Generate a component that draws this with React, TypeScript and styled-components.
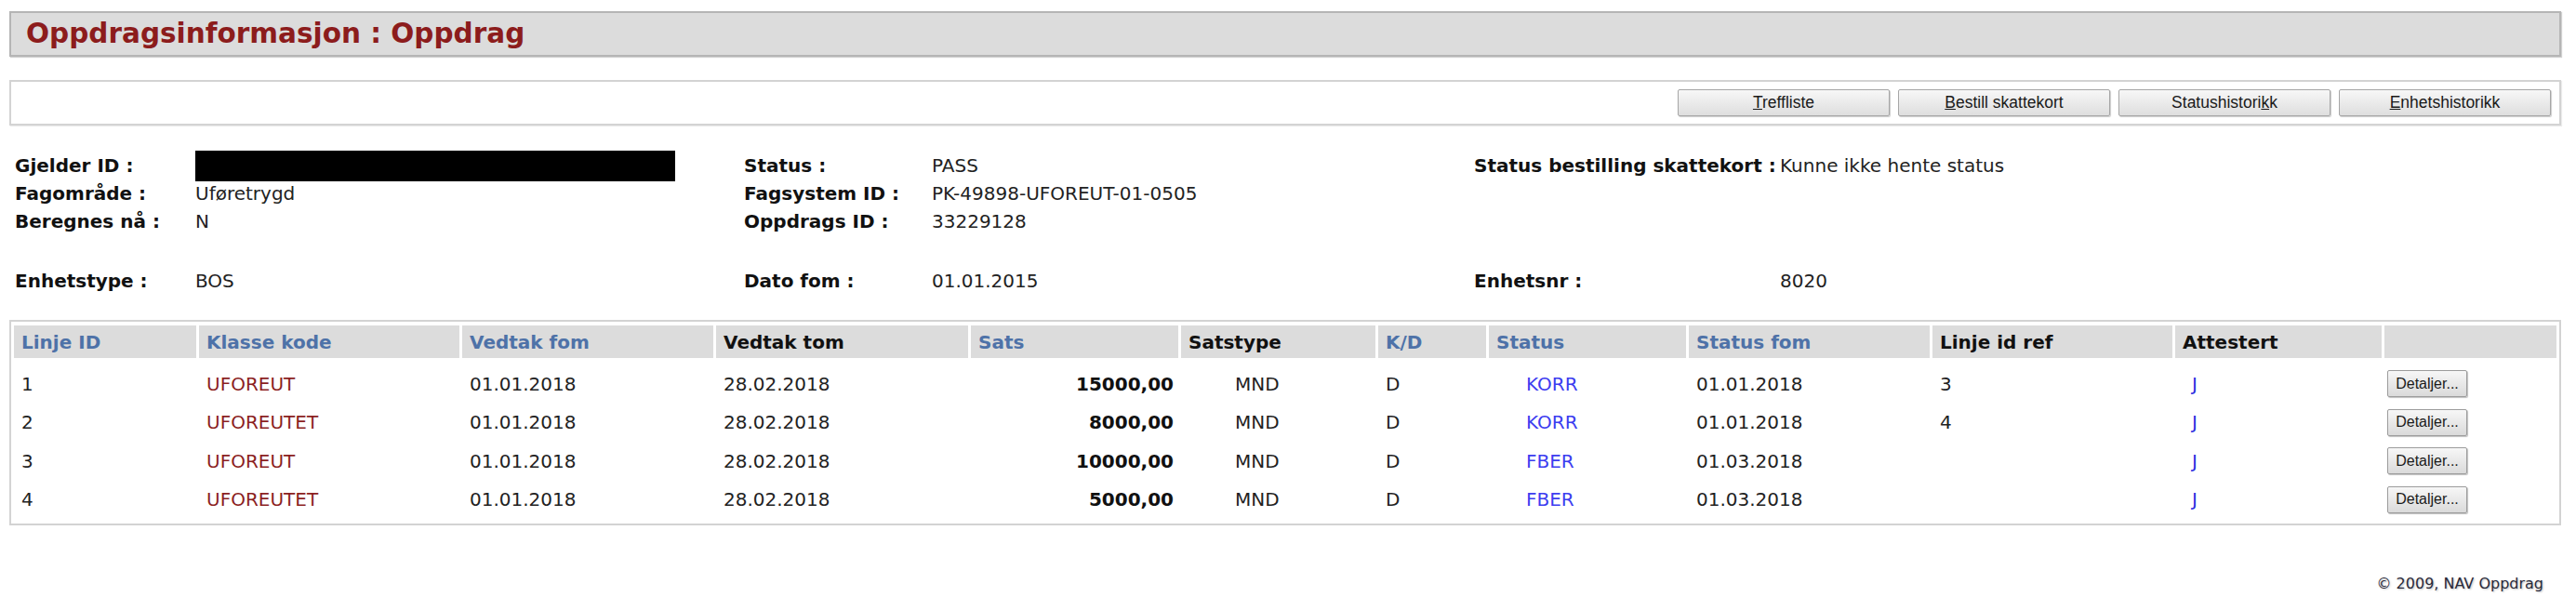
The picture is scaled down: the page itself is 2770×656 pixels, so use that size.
import React from "react";
import styled, { createGlobalStyle } from "styled-components";

const GlobalStyle = createGlobalStyle`
  html, body { margin: 0; padding: 0; background: #ffffff; }
  body { font-family: "DejaVu Sans", Verdana, sans-serif; color: #111; }
  #root { width: 2770px; }
`;

const Page = styled.div`
  width: 2770px;
  box-sizing: border-box;
  padding: 12px 16px 0 10px;
`;

const TitleBar = styled.header`
  height: 49px;
  box-sizing: border-box;
  border: 2px solid #b5b5b5;
  background: #dcdcdc;
  box-shadow: 1px 1px 1px rgba(0, 0, 0, 0.18);
  display: flex;
  align-items: center;
  padding-left: 16px;
`;

const Title = styled.h1`
  margin: 0;
  font-size: 29.5px;
  line-height: 1;
  font-weight: bold;
  color: #8c1c1c;
`;

const ButtonBar = styled.nav`
  margin-top: 25px;
  height: 49px;
  box-sizing: border-box;
  border: 2px solid #d3d3d3;
  background: #ffffff;
  box-shadow: 1px 1px 1px rgba(0, 0, 0, 0.08);
  display: flex;
  justify-content: flex-end;
  align-items: center;
  gap: 9px;
  padding-right: 9px;
`;

const ToolButton = styled.button`
  width: 228px;
  height: 29px;
  box-sizing: border-box;
  border: 1px solid #a6a6a6;
  border-radius: 2px;
  background: linear-gradient(#f7f7f7, #dedede);
  box-shadow: 1px 1px 1px rgba(0, 0, 0, 0.2);
  font-family: "Liberation Sans", Arial, sans-serif;
  font-size: 17.5px;
  color: #1a1a1a;
  padding: 0;
  cursor: pointer;
`;

const InfoGrid = styled.section`
  margin-top: 28px;
  padding-left: 6px;
  display: grid;
  grid-template-columns: 194px 590px 202px 583px 329px 1fr;
  grid-template-rows: 30px 30px 30px 34px 30px;
  align-items: center;
  font-size: 20px;
`;

const Label = styled.div`
  font-weight: bold;
  color: #111;
  white-space: nowrap;
`;

const Value = styled.div`
  color: #222;
  white-space: nowrap;
`;

const Redacted = styled.div`
  width: 516px;
  height: 33px;
  background: #000;
`;

const Spacer = styled.div`
  grid-column: 1 / -1;
`;

const TableBox = styled.div`
  margin-top: 27px;
  border: 2px solid #d3d3d3;
  padding: 4px 0 5px;
`;

const Table = styled.table`
  width: 100%;
  table-layout: fixed;
  border-collapse: separate;
  border-spacing: 3px 0;
  font-size: 20px;
`;

const Col = styled.col<{ $w?: number }>`
  width: ${(p) => (p.$w ? `${p.$w}px` : "auto")};
`;

const Th = styled.th<{ $link?: boolean }>`
  height: 35px;
  padding: 0 0 0 8px;
  background: #dcdcdc;
  border-bottom: 7px solid #ffffff;
  text-align: left;
  font-weight: bold;
  white-space: nowrap;
  color: ${(p) => (p.$link ? "#4e72a8" : "#111")};
`;

const Td = styled.td<{ $right?: boolean; $pl?: number; $color?: string; $bold?: boolean }>`
  height: 41.5px;
  padding: 0 5px 0 ${(p) => (p.$pl ?? 8)}px;
  text-align: ${(p) => (p.$right ? "right" : "left")};
  color: ${(p) => p.$color ?? "#222"};
  font-weight: ${(p) => (p.$bold ? "bold" : "normal")};
  white-space: nowrap;
  vertical-align: middle;
`;

const Link = styled.a`
  color: inherit;
  text-decoration: none;
`;

const DetailButton = styled.button`
  width: 86px;
  height: 29px;
  box-sizing: border-box;
  border: 1px solid #9c9c9c;
  border-radius: 2px;
  background: linear-gradient(#f7f7f7, #dadada);
  box-shadow: 1px 1px 1px rgba(0, 0, 0, 0.25);
  font-family: "Liberation Sans", Arial, sans-serif;
  font-size: 16px;
  color: #1a1a1a;
  padding: 0;
`;

const Footer = styled.footer`
  margin-top: 53px;
  padding-right: 19px;
  text-align: right;
  font-size: 16px;
  line-height: 20px;
  color: #2a2a3a;
  text-shadow: 1px 1px 2px rgba(0, 0, 0, 0.25);
`;

type Row = {
  id: string;
  klasse: string;
  fom: string;
  tom: string;
  sats: string;
  status: string;
  statusFom: string;
  ref: string;
};

const rows: Row[] = [
  { id: "1", klasse: "UFOREUT", fom: "01.01.2018", tom: "28.02.2018", sats: "15000,00", status: "KORR", statusFom: "01.01.2018", ref: "3" },
  { id: "2", klasse: "UFOREUTET", fom: "01.01.2018", tom: "28.02.2018", sats: "8000,00", status: "KORR", statusFom: "01.01.2018", ref: "4" },
  { id: "3", klasse: "UFOREUT", fom: "01.01.2018", tom: "28.02.2018", sats: "10000,00", status: "FBER", statusFom: "01.03.2018", ref: "" },
  { id: "4", klasse: "UFOREUTET", fom: "01.01.2018", tom: "28.02.2018", sats: "5000,00", status: "FBER", statusFom: "01.03.2018", ref: "" },
];

const headers: { text: string; link: boolean }[] = [
  { text: "Linje ID", link: true },
  { text: "Klasse kode", link: true },
  { text: "Vedtak fom", link: true },
  { text: "Vedtak tom", link: false },
  { text: "Sats", link: true },
  { text: "Satstype", link: false },
  { text: "K/D", link: true },
  { text: "Status", link: true },
  { text: "Status fom", link: true },
  { text: "Linje id ref", link: false },
  { text: "Attestert", link: false },
  { text: "", link: false },
];

const colWidths = [196, 280, 270, 271, 223, 209, 116, 212, 259, 258, 222];

export default function App() {
  return (
    <>
      <GlobalStyle />
      <Page>
        <TitleBar>
          <Title>Oppdragsinformasjon : Oppdrag</Title>
        </TitleBar>

        <ButtonBar>
          <ToolButton><u>T</u>reffliste</ToolButton>
          <ToolButton><u>B</u>estill skattekort</ToolButton>
          <ToolButton>Statushistori<u>k</u>k</ToolButton>
          <ToolButton><u>E</u>nhetshistorikk</ToolButton>
        </ButtonBar>

        <InfoGrid>
          <Label>Gjelder ID :</Label>
          <Redacted />
          <Label>Status :</Label>
          <Value>PASS</Value>
          <Label>Status bestilling skattekort :</Label>
          <Value>Kunne ikke hente status</Value>

          <Label>Fagområde :</Label>
          <Value>Uføretrygd</Value>
          <Label>Fagsystem ID :</Label>
          <Value>PK-49898-UFOREUT-01-0505</Value>
          <Value />
          <Value />

          <Label>Beregnes nå :</Label>
          <Value>N</Value>
          <Label>Oppdrags ID :</Label>
          <Value>33229128</Value>
          <Value />
          <Value />

          <Spacer />

          <Label>Enhetstype :</Label>
          <Value>BOS</Value>
          <Label>Dato fom :</Label>
          <Value>01.01.2015</Value>
          <Label>Enhetsnr :</Label>
          <Value>8020</Value>
        </InfoGrid>

        <TableBox>
          <Table>
            <colgroup>
              {colWidths.map((w, i) => (
                <Col key={i} $w={w} />
              ))}
              <Col />
            </colgroup>
            <thead>
              <tr>
                {headers.map((h, i) => (
                  <Th key={i} $link={h.link}>{h.text}</Th>
                ))}
              </tr>
            </thead>
            <tbody>
              {rows.map((r) => (
                <tr key={r.id}>
                  <Td>{r.id}</Td>
                  <Td $color="#8c1f1f">{r.klasse}</Td>
                  <Td>{r.fom}</Td>
                  <Td>{r.tom}</Td>
                  <Td $right $bold $color="#111">{r.sats}</Td>
                  <Td $pl={58}>MND</Td>
                  <Td>D</Td>
                  <Td $pl={40} $color="#3d3df0"><Link>{r.status}</Link></Td>
                  <Td>{r.statusFom}</Td>
                  <Td>{r.ref}</Td>
                  <Td $pl={18} $color="#2f2fe0"><Link>J</Link></Td>
                  <Td $pl={3}><DetailButton>Detaljer...</DetailButton></Td>
                </tr>
              ))}
            </tbody>
          </Table>
        </TableBox>

        <Footer>© 2009, NAV Oppdrag</Footer>
      </Page>
    </>
  );
}
